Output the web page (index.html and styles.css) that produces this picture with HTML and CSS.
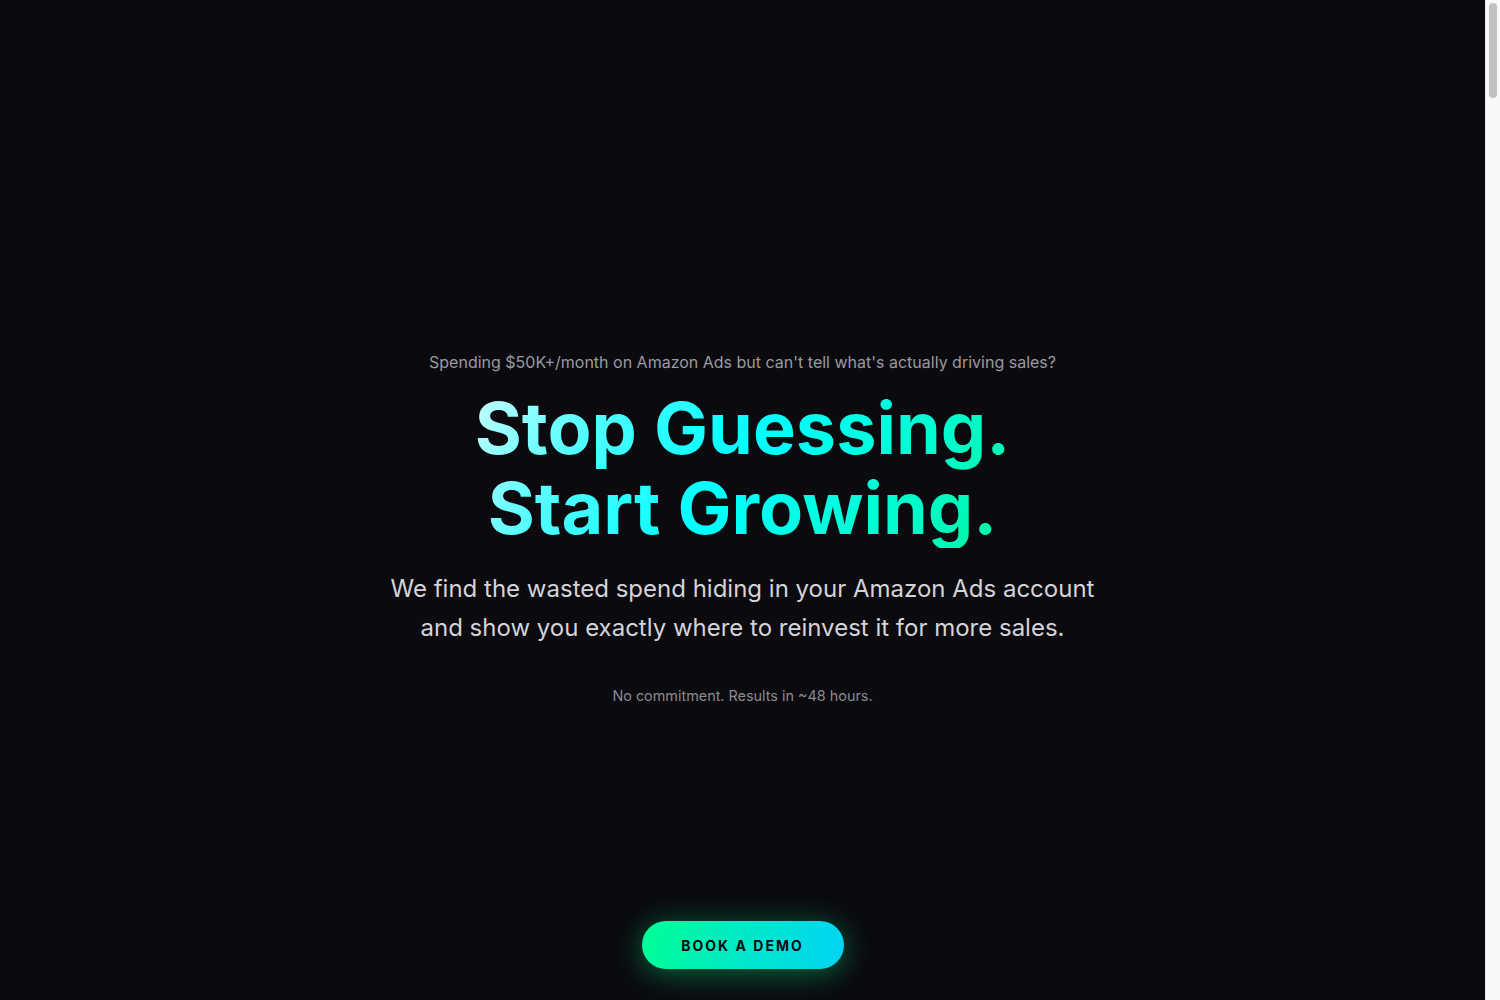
FILE: index.html
```html
<!DOCTYPE html>
<html lang="en">
<head>
<meta charset="utf-8">
<title>Stop Guessing. Start Growing.</title>
<link rel="stylesheet" href="styles.css">
</head>
<body>
<div class="frame">
  <main class="page">
    <section class="hero">
      <p class="eyebrow">Spending $50K+/month on Amazon Ads but can't tell what's actually driving sales?</p>
      <h1 class="title">Stop Guessing.<br>Start Growing.</h1>
      <p class="lead">We find the wasted spend hiding in your Amazon Ads account<br>and show you exactly where to reinvest it for more sales.</p>
      <p class="note">No commitment. Results in ~48 hours.</p>
      <a class="cta" href="#">BOOK A DEMO</a>
    </section>
  </main>
  <div class="scrollbar" aria-hidden="true"><div class="thumb"></div></div>
</div>
</body>
</html>
```
FILE: styles.css
```css
html, body {
  margin: 0;
  padding: 0;
  background: #0a0a0f;
  overflow: hidden;
}
body {
  font-family: Inter, "Noto Sans", sans-serif;
  color: #e5e7eb;
}
.frame {
  display: flex;
  height: 100vh;
}
.page {
  flex: 1;
  display: flex;
  flex-direction: column;
  overflow: hidden;
}
.scrollbar {
  width: 15px;
  flex: none;
  background: #f8f8f8;
  border-left: 1px solid #ececec;
  box-sizing: border-box;
  padding: 3px 3px 0 3px;
}
.thumb {
  height: 95px;
  width: 8px;
  border-radius: 4px;
  background: #c1c1c1;
}
.hero {
  display: flex;
  flex-direction: column;
  align-items: center;
  text-align: center;
  padding-top: 350px;
}
.eyebrow {
  margin: 0;
  font-size: 16px;
  line-height: 24px;
  color: #9a9aa3;
}
.title {
  margin: 14px 0 0;
  font-size: 72px;
  font-weight: 700;
  line-height: 80px;
  letter-spacing: 0;
  background: linear-gradient(120deg, #c8ffff 0%, #50fdff 22%, #00ffff 48%, #00fdd0 78%, #00f5a0 100%);
  -webkit-background-clip: text;
  background-clip: text;
  color: transparent;
}
.lead {
  margin: 21px 0 0;
  font-size: 24px;
  line-height: 39px;
  color: #d4d4d8;
}
.note {
  margin: 39px 0 0;
  font-size: 14.4px;
  line-height: 20px;
  color: #8b8b94;
}
.cta {
  margin-top: 215px;
  display: inline-flex;
  align-items: center;
  justify-content: center;
  width: 202px;
  height: 48px;
  border-radius: 999px;
  background: linear-gradient(100deg, #00ff94 0%, #00e8c8 50%, #00d4f5 100%);
  color: #0a0a0f;
  font-size: 14px;
  font-weight: 700;
  letter-spacing: 2px;
  text-decoration: none;
  box-shadow: 0 4px 30px rgba(0, 255, 140, 0.4);
}
```
